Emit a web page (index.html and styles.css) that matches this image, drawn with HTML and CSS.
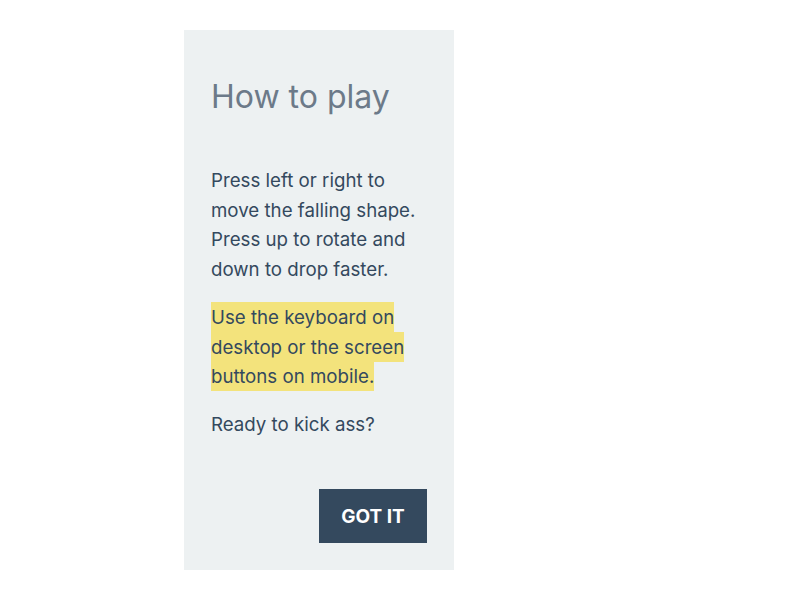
FILE: index.html
```html
<!DOCTYPE html>
<html>
<head>
<meta charset="utf-8">
<link rel="stylesheet" href="styles.css">
</head>
<body>
<div class="panel">
  <h1 class="title">How to play</h1>
  <p class="text">Press left or right to move the falling shape. Press up to rotate and down to drop faster.</p>
  <p class="text"><span class="mark">Use the keyboard on desktop or the screen buttons on mobile.</span></p>
  <p class="text">Ready to kick ass?</p>
  <div class="actions">
    <button class="btn">GOT IT</button>
  </div>
</div>
</body>
</html>
```
FILE: styles.css
```css
html, body {
  margin: 0;
  padding: 0;
  background: #ffffff;
}
body {
  font-family: Inter, "Noto Sans", sans-serif;
}
.panel {
  box-sizing: border-box;
  width: 270px;
  height: 540px;
  margin: 30px 0 0 184px;
  padding: 27px;
  background: #edf1f2;
  display: flex;
  flex-direction: column;
}
.title {
  margin: 20px 0 49px;
  font-size: 32px;
  line-height: 40px;
  font-weight: 400;
  color: #6c7a89;
}
.text {
  margin: 0 0 18.7px;
  font-size: 18.7px;
  line-height: 29.5px;
  color: #34495e;
}
.mark {
  background: #f3e37c;
  padding: 3.5px 0;
}
.actions {
  margin-top: auto;
  display: flex;
  justify-content: flex-end;
}
.btn {
  width: 108px;
  height: 54px;
  border: none;
  background: #34495e;
  color: #ffffff;
  font-family: Inter, "Noto Sans", sans-serif;
  font-size: 19px;
  font-weight: 700;
  padding: 0;
}
```
